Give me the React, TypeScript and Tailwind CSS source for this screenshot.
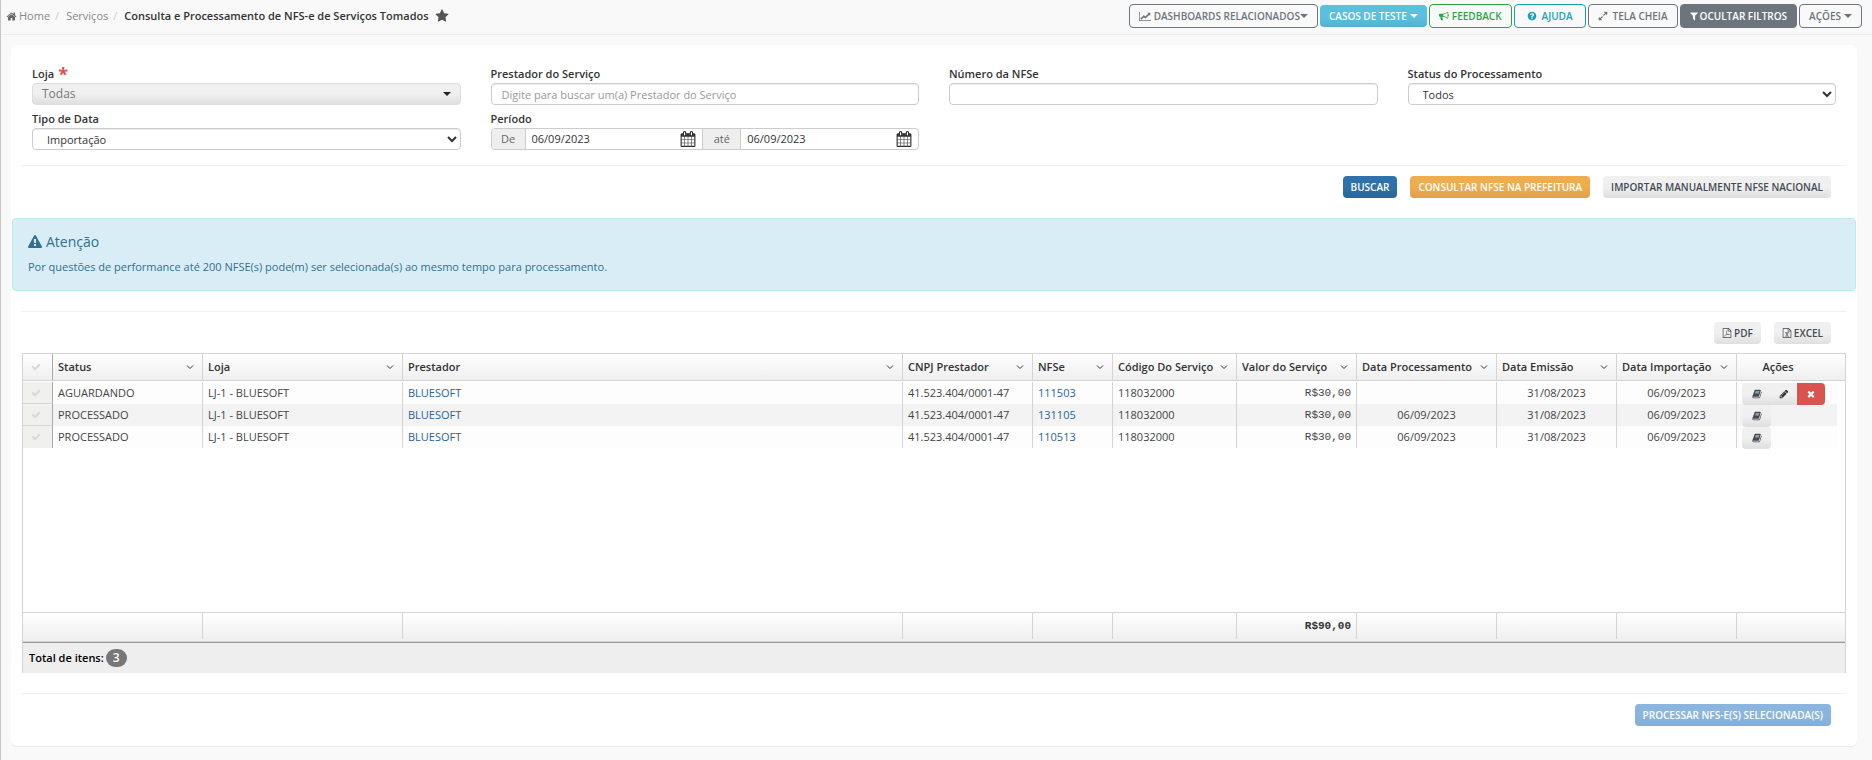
import { useState } from 'react';
import type { ReactNode } from 'react';
import clsx from 'clsx';

// Font Awesome 4 glyphs, 1792 units tall
const ICONS = {
  home: { w: 1664, d: 'M1408 992v480q0 26-19 45t-45 19h-384v-384h-256v384h-384q-26 0-45-19t-19-45v-480q0-1 .5-3t.5-3l575-474 575 474q1 2 1 6zm223-69l-62 74q-8 9-21 11h-3q-13 0-21-7l-692-577-692 577q-12 8-24 7-13-2-21-11l-62-74q-8-10-7-23.5t11-21.5l719-599q32-26 76-26t76 26l244 204v-195q0-14 9-23t23-9h192q14 0 23 9t9 23v408l219 182q10 8 11 21.5t-7 23.5z' },
  star: { w: 1792, d: 'M1728 647q0 22-26 48l-363 354 86 500q1 7 1 20 0 21-10.5 35.5t-30.5 14.5q-19 0-40-12l-449-236-449 236q-22 12-40 12-21 0-31.5-14.5t-10.5-35.5q0-6 2-20l86-500-364-354q-25-27-25-48 0-37 56-46l502-73 225-455q19-41 49-41t49 41l225 455 502 73q56 9 56 46z' },
  chart: { w: 2048, d: 'M2048 1536v128h-2048v-1536h128v1408h1920zm-128-1248v435q0 21-19.5 29.5t-35.5-7.5l-121-121-633 633q-10 10-23 10t-23-10l-233-233-416 416-192-192 585-585q10-10 23-10t23 10l233 233 464-464-121-121q-16-16-7.5-35.5t29.5-19.5h435q14 0 23 9t9 23z' },
  bullhorn: { w: 1792, d: 'M1664 640q53 0 90.5 37.5t37.5 90.5-37.5 90.5-90.5 37.5v384q0 52-38 90t-90 38q-417-347-812-380-58 19-91 66t-31 100.5 40 92.5q-20 33-23 65.5t6 58 33.5 55 48 50 61.5 50.5q-29 58-111.5 83t-168.5 11.5-132-55.5q-7-23-29.5-87.5t-32-94.5-23-89-15-101 3.5-98 22-110.5h-122q-66 0-113-47t-47-113v-192q0-66 47-113t113-47h480q435 0 896-384 52 0 90 38t38 90v384zm-128 604v-954q-394 302-768 343v270q377 42 768 341z' },
  help: { w: 1792, d: 'M1024 1376v-192q0-14-9-23t-23-9h-192q-14 0-23 9t-9 23v192q0 14 9 23t23 9h192q14 0 23-9t9-23zm256-672q0-88-55.5-163t-138.5-116-170-41q-243 0-371 213-15 24 8 42l132 100q7 6 19 6 16 0 25-12 53-68 86-92 34-24 86-24 48 0 85.5 26t37.5 59q0 38-20 61t-68 45q-63 28-115.5 86.5t-52.5 125.5v36q0 14 9 23t23 9h192q14 0 23-9t9-23q0-19 21.5-49.5t54.5-49.5q32-18 49-28.5t46-35 44.5-48 28-60.5 12.5-81zm384 192q0 209-103 385.5t-279.5 279.5-385.5 103-385.5-103-279.5-279.5-103-385.5 103-385.5 279.5-279.5 385.5-103 385.5 103 279.5 279.5 103 385.5z' },
  expand: { w: 1792, d: 'M883 1056q0 13-10 23l-332 332 144 144q19 19 19 45t-19 45-45 19h-448q-26 0-45-19t-19-45v-448q0-26 19-45t45-19 45 19l144 144 332-332q10-10 23-10t23 10l114 114q10 10 10 23zm781-864v448q0 26-19 45t-45 19-45-19l-144-144-332 332q-10 10-23 10t-23-10l-114-114q-10-10-10-23t10-23l332-332-144-144q-19-19-19-45t19-45 45-19h448q26 0 45 19t19 45z' },
  filter: { w: 1408, d: 'M1403 295q17 41-14 70l-493 493v742q0 42-39 59-13 5-25 5-27 0-45-19l-256-256q-19-19-19-45v-486l-493-493q-31-29-14-70 17-39 59-39h1280q42 0 59 39z' },
  calendar: { w: 1792, d: 'M192 1664h288v-288h-288v288zm352 0h320v-288h-320v288zm-352-352h288v-320h-288v320zm352 0h320v-320h-320v320zm-352-384h288v-288h-288v288zm736 736h320v-288h-320v288zm-384-736h320v-288h-320v288zm768 736h288v-288h-288v288zm-384-352h320v-320h-320v320zm-352-864v-288q0-13-9.5-22.5t-22.5-9.5h-64q-13 0-22.5 9.5t-9.5 22.5v288q0 13 9.5 22.5t22.5 9.5h64q13 0 22.5-9.5t9.5-22.5zm736 864h288v-320h-288v320zm-384-384h320v-288h-320v288zm384 0h288v-288h-288v288zm32-480v-288q0-13-9.5-22.5t-22.5-9.5h-64q-13 0-22.5 9.5t-9.5 22.5v288q0 13 9.5 22.5t22.5 9.5h64q13 0 22.5-9.5t9.5-22.5zm384-64v1280q0 52-38 90t-90 38h-1408q-52 0-90-38t-38-90v-1280q0-52 38-90t90-38h128v-96q0-66 47-113t113-47h64q66 0 113 47t47 113v96h384v-96q0-66 47-113t113-47h64q66 0 113 47t47 113v96h128q52 0 90 38t38 90z' },
  warning: { w: 1792, d: 'M1024 1375v-190q0-14-9.5-23.5t-22.5-9.5h-192q-13 0-22.5 9.5t-9.5 23.5v190q0 14 9.5 23.5t22.5 9.5h192q13 0 22.5-9.5t9.5-23.5zm-2-374l18-459q0-12-10-19-13-11-24-11h-220q-11 0-24 11-10 7-10 21l17 457q0 10 10 16.5t24 6.5h185q14 0 23.5-6.5t10.5-16.5zm-14-934l768 1408q35 63-2 126-17 29-46.5 46t-63.5 17h-1536q-34 0-63.5-17t-46.5-46q-37-63-2-126l768-1408q17-31 47-49t65-18 65 18 47 49z' },
  book: { w: 1792, d: 'M1703 478q40 57 18 129l-275 906q-19 64-76.5 107.5t-122.5 43.5h-923q-77 0-148.5-53.5t-99.5-131.5q-24-67-2-127 0-4 3-27t4-37q1-8-3-21.5t-3-19.5q2-11 8-21t16.5-23.5 16.5-23.5q23-38 45-91.5t30-91.5q3-10 .5-30t-.5-28q3-11 17-28t17-23q21-36 42-92t25-90q1-9-2.5-32t.5-28q4-13 22-30.5t22-22.5q19-26 42.5-84.5t27.5-96.5q1-8-3-25.5t-2-26.5q2-8 9-18t18-23 17-21q8-12 16.5-30.5t15-35 16-36 19.5-32 26.5-23.5 36-11.5 47.5 5.5l-1 3q38-9 51-9h761q74 0 114 56t18 130l-274 906q-36 119-71.5 153.5t-128.5 34.5h-869q-27 0-38 15-11 16-1 43 24 70 144 70h923q29 0 56-15.5t35-41.5l300-987q7-22 5-57 38 15 59 43zm-1064 2q-4 13 2 22.5t20 9.5h608q13 0 25.5-9.5t16.5-22.5l21-64q4-13-2-22.5t-20-9.5h-608q-13 0-25.5 9.5t-16.5 22.5zm-83 256q-4 13 2 22.5t20 9.5h608q13 0 25.5-9.5t16.5-22.5l21-64q4-13-2-22.5t-20-9.5h-608q-13 0-25.5 9.5t-16.5 22.5z' },
  pencil: { w: 1792, d: 'M491 1536l91-91-235-235-91 91v107h128v128h107zm523-928q0-22-22-22-10 0-17 7l-542 542q-7 7-7 17 0 22 22 22 10 0 17-7l542-542q7-7 7-17zm-54-192l416 416-832 832h-416v-416zm683 96q0 53-37 90l-166 166-416-416 166-165q36-38 90-38 53 0 91 38l235 234q37 39 37 91z' },
  times: { w: 1792, d: 'M1490 1322q0 40-28 68l-136 136q-28 28-68 28t-68-28l-294-294-294 294q-28 28-68 28t-68-28l-136-136q-28-28-28-68t28-68l294-294-294-294q-28-28-28-68t28-68l136-136q28-28 68-28t68 28l294 294 294-294q28-28 68-28t68 28l136 136q28 28 28 68t-28 68l-294 294 294 294q28 28 28 68z' },
  check: { w: 1792, d: 'M1671 566q0 40-28 68l-724 724-136 136q-28 28-68 28t-68-28l-136-136-362-362q-28-28-28-68t28-68l136-136q28-28 68-28t68 28l294 295 656-657q28-28 68-28t68 28l136 136q28 28 28 68z' },
  pdf: { w: 1792, d: 'M1596 380q28 28 48 76t20 88v1152q0 40-28 68t-68 28h-1344q-40 0-68-28t-28-68v-1600q0-40 28-68t68-28h896q40 0 88 20t76 48zm-444-244v376h376q-10-29-22-41l-313-313q-12-12-41-22zm384 1528v-1024h-416q-40 0-68-28t-28-68v-416h-768v1536h1280zm-514-593q33 26 84 56 59-7 117-7 147 0 177 49 16 22 2 52 0 1-1 2l-2 2v1q-6 38-71 38-48 0-115-20t-130-53q-221 24-392 83-153 262-242 262-15 0-28-7l-24-12q-1-1-6-5-10-10-6-36 9-40 56-91.5t132-96.5q14-9 23 6 2 2 2 4 52-85 107-197 68-136 104-262-24-82-30.5-159.5t6.5-127.5q11-40 42-40h22q23 0 35 15 18 21 9 68-2 6-4 8 1 3 1 8v30q-2 123-14 192 55 164 146 238zm-576 411q52-24 137-158-51 40-87.5 84t-49.5 74zm398-920q-15 42-2 132 1-7 7-44 0-3 7-43 1-4 4-8-1-1-1-2-1-2-1-3-1-22-13-36 0 1-1 2v2zm-124 661q135-54 284-81-2-1-13-9.5t-16-13.5q-76-67-127-176-27 86-83 197-30 56-45 83zm646-16q-24-24-140-24 76 28 124 28 14 0 18-1 0-1-2-3z' },
  excel: { w: 1792, d: 'M1596 380q28 28 48 76t20 88v1152q0 40-28 68t-68 28h-1344q-40 0-68-28t-28-68v-1600q0-40 28-68t68-28h896q40 0 88 20t76 48zm-444-244v376h376q-10-29-22-41l-313-313q-12-12-41-22zm384 1528v-1024h-416q-40 0-68-28t-28-68v-416h-768v1536h1280zm-979-234v106h281v-106h-75l103-161q5-7 10-16.5t7.5-13.5 3.5-4h2q1 4 5 10 2 4 4.5 7.5t6 8 6.5 8.5l107 161h-76v106h291v-106h-68l-192-273 195-282h67v-107h-279v107h74l-103 159q-4 7-10 16.5t-9 13.5l-2 3h-2q-1-4-5-10-6-11-17-23l-106-159h76v-107h-290v107h68l189 272-194 283h-68z' },
};

function Icon({ name, className }: { name: keyof typeof ICONS; className?: string }) {
  const icon = ICONS[name];
  return (
    <svg viewBox={`0 0 ${icon.w} 1792`} fill="currentColor" className={clsx('shrink-0', className)} aria-hidden="true">
      <path d={icon.d} />
    </svg>
  );
}

function Caret({ className }: { className?: string }) {
  return (
    <svg viewBox="0 0 8 4" fill="currentColor" className={clsx('h-1 w-2 shrink-0', className)} aria-hidden="true">
      <path d="M0 0h8L4 4z" />
    </svg>
  );
}

function Chevron() {
  return (
    <svg viewBox="0 0 8 8" fill="none" stroke="currentColor" className="size-2 shrink-0" aria-hidden="true">
      <path d="M1 2.5l3 3 3-3" />
    </svg>
  );
}

const topBtn = 'flex h-6 items-center rounded border text-[10px] font-semibold';
const btn = 'flex h-[22px] items-center rounded px-2 text-[10px] font-semibold';
const lightBtn = 'bg-linear-to-b from-[#f0f0f0] from-50% to-[#dfdfdf] text-[#444b55]';
const field = 'h-[22px] w-full rounded border border-[#ccc] bg-white text-[11px] text-[#333] shadow-[inset_0_1px_1px_rgba(0,0,0,0.075)]';

function Field({ id, label, required, children }: { id: string; label: string; required?: boolean; children: ReactNode }) {
  return (
    <div>
      <label htmlFor={id} className="flex h-[18px] items-center gap-1 text-[11px] font-semibold text-[#333]">
        {label}
        {required && <span className="text-lg leading-[18px] font-bold text-[#d9534f]">*</span>}
      </label>
      {children}
    </div>
  );
}

interface Nota {
  status: string;
  nfse: string;
  processamento: string;
}

const notas: Nota[] = [
  { status: 'AGUARDANDO', nfse: '111503', processamento: '' },
  { status: 'PROCESSADO', nfse: '131105', processamento: '06/09/2023' },
  { status: 'PROCESSADO', nfse: '110513', processamento: '06/09/2023' },
];

const columns = [
  { title: 'Status', width: 'w-[150px]' },
  { title: 'Loja', width: 'w-[200px]' },
  { title: 'Prestador', width: '' },
  { title: 'CNPJ Prestador', width: 'w-[130px]' },
  { title: 'NFSe', width: 'w-[80px]' },
  { title: 'Código Do Serviço', width: 'w-[124px]' },
  { title: 'Valor do Serviço', width: 'w-[120px]' },
  { title: 'Data Processamento', width: 'w-[140px]' },
  { title: 'Data Emissão', width: 'w-[120px]' },
  { title: 'Data Importação', width: 'w-[120px]' },
];

function NotasTable() {
  const cell = 'border-r border-[#d4d4d4] px-[5px]';
  return (
    <table className="w-full table-fixed border-separate border-spacing-0 text-left text-[11px] text-[#444]">
      <colgroup>
        <col className="w-[30px]" />
        {columns.map((c) => <col key={c.title} className={c.width} />)}
        <col className="w-[100px]" />
        <col className="w-2" />
      </colgroup>
      <thead>
        <tr className="h-[27px] bg-linear-to-b from-white to-[#eee] text-[#333]">
          <th className="border-r border-b border-[#d4d4d4] border-r-[#aaa] p-0">
            <Icon name="check" className="ml-2 size-[10px] text-[#d8d8d8]" />
          </th>
          {columns.map((c) => (
            <th key={c.title} className="border-r border-b border-[#d4d4d4] py-0 pr-2 pl-[5px] font-semibold whitespace-nowrap">
              <span className="flex items-center justify-between">
                {c.title}
                <Chevron />
              </span>
            </th>
          ))}
          <th colSpan={2} className="border-b border-[#d4d4d4] py-0 pr-[26px] pl-0 text-center font-semibold">Ações</th>
        </tr>
      </thead>
      <tbody>
        <tr className="h-px"><td colSpan={13} className="p-0" /></tr>
        {notas.map((n, i) => {
          const bg = i % 2 ? 'bg-[#f3f3f3]' : 'bg-[#fdfdfd]';
          const last = i === notas.length - 1;
          return (
            <tr key={n.nfse} className="h-[22px]">
              <td className={clsx('border-r border-r-[#aaa] bg-[#f0f0ee] p-0', !last && 'border-b border-b-[#d4d4d4]')}>
                <Icon name="check" className="ml-2 size-[10px] text-[#d8d8d8]" />
              </td>
              <td className={clsx(cell, bg)}>{n.status}</td>
              <td className={clsx(cell, bg)}>LJ-1 - BLUESOFT</td>
              <td className={clsx(cell, bg)}><a href="#prestador" className="text-[#2a6496]">BLUESOFT</a></td>
              <td className={clsx(cell, bg)}>41.523.404/0001-47</td>
              <td className={clsx(cell, bg)}><a href="#nfse" className="text-[#2a6496]">{n.nfse}</a></td>
              <td className={clsx(cell, bg)}>118032000</td>
              <td className={clsx(cell, bg, "text-right font-['Courier_New','Liberation_Mono',monospace]")}>R$30,00</td>
              <td className={clsx(cell, bg, 'text-center')}>{n.processamento}</td>
              <td className={clsx(cell, bg, 'text-center')}>31/08/2023</td>
              <td className={clsx(cell, bg, 'text-center')}>06/09/2023</td>
              <td className={clsx('p-0', bg)}>
                <div className="-mb-px ml-[5px] flex h-[22px] w-max overflow-hidden rounded">
                  <button type="button" aria-label="Detalhes" className={clsx('flex w-[29px] items-center justify-center', lightBtn)}>
                    <Icon name="book" className="size-[10px]" />
                  </button>
                  {i === 0 && (
                    <>
                      <button type="button" aria-label="Editar" className={clsx('flex w-[26px] items-center justify-center', lightBtn)}>
                        <Icon name="pencil" className="size-[10px] text-[#333]" />
                      </button>
                      <button type="button" aria-label="Excluir" className="flex w-7 items-center justify-center bg-[#d9534f] text-white">
                        <Icon name="times" className="size-[10px]" />
                      </button>
                    </>
                  )}
                </div>
              </td>
              <td className="p-0" />
            </tr>
          );
        })}
        <tr className="h-[164px]"><td colSpan={13} className="p-0" /></tr>
      </tbody>
      <tfoot>
        <tr className="h-[30px] bg-linear-to-b from-white to-[#eee] align-top">
          {columns.map((c, i) => (
            <td key={c.title} colSpan={i === 0 ? 2 : 1} className="border-t border-b border-[#d4d4d4] p-0">
              <div className="h-[26px] border-r border-[#d4d4d4] pr-[5px] text-right font-['Courier_New','Liberation_Mono',monospace] leading-[26px] font-bold text-[#333]">
                {c.title === 'Valor do Serviço' && 'R$90,00'}
              </div>
            </td>
          ))}
          <td colSpan={2} className="border-t border-b border-[#d4d4d4] p-0" />
        </tr>
      </tfoot>
    </table>
  );
}

export default function App() {
  const [prestador, setPrestador] = useState('');
  const [numero, setNumero] = useState('');
  const [dataDe, setDataDe] = useState('06/09/2023');
  const [dataAte, setDataAte] = useState('06/09/2023');

  return (
    <div className="min-h-screen border-l border-[#c6c6c6] bg-[#f9f9f9] font-['Open_Sans','Noto_Sans',sans-serif] text-[11px] leading-4 text-[#333]">
      <header className="flex h-[35px] items-start justify-between border-b border-[#ebebeb] pr-[10px] pl-[5px]">
        <nav className="flex h-8 items-center text-[11px] text-[#888]">
          <a href="#home" className="flex items-center gap-[2px]">
            <Icon name="home" className="size-[11px] text-[#666]" />
            Home
          </a>
          <span className="px-[5px] text-[#ccc]">/</span>
          <a href="#servicos" className="pl-[2px]">Serviços</a>
          <span className="px-[5px] text-[#ccc]">/</span>
          <h1 className="pl-[2px] font-semibold text-[#333]">Consulta e Processamento de NFS-e de Serviços Tomados</h1>
          <Icon name="star" className="ml-[6px] size-[14px] text-[#555]" />
        </nav>
        <div className="flex items-center gap-[2px] pt-1">
          <button type="button" className={clsx(topBtn, 'border-[#6c757d] px-[9px] text-[#6c757d]')}>
            <Icon name="chart" className="mr-[3px] h-[11px] w-3" />
            DASHBOARDS RELACIONADOS
            <Caret />
          </button>
          <button type="button" className="flex h-[22px] items-center gap-[3px] rounded bg-linear-to-b from-[#5bc0de] from-50% to-[#52b3d1] px-[9px] text-[10px] font-semibold text-white">
            CASOS DE TESTE
            <Caret />
          </button>
          <button type="button" className={clsx(topBtn, 'gap-[3px] border-[#28a745] px-[9px] text-[#28a745]')}>
            <Icon name="bullhorn" className="size-[10px]" />
            FEEDBACK
          </button>
          <button type="button" className={clsx(topBtn, 'gap-[5px] border-[#17a2b8] px-3 text-[#17a2b8]')}>
            <Icon name="help" className="size-[10px]" />
            AJUDA
          </button>
          <button type="button" className={clsx(topBtn, 'gap-[5px] border-[#6c757d] px-[9px] text-[#6c757d]')}>
            <Icon name="expand" className="size-[10px]" />
            TELA CHEIA
          </button>
          <button type="button" className={clsx(topBtn, 'gap-[2px] border-[#6c757d] bg-[#6c757d] px-[9px] text-white')}>
            <Icon name="filter" className="h-[10px] w-2" />
            OCULTAR FILTROS
          </button>
          <button type="button" className={clsx(topBtn, 'gap-[3px] border-[#6c757d] px-[9px] text-[#6c757d]')}>
            AÇÕES
            <Caret />
          </button>
        </div>
      </header>

      <main className="mt-[10px] mr-[15px] ml-[10px] rounded-md border-b border-[#ebebeb] bg-white pt-5 pb-5">
        <form className="grid grid-cols-4 gap-x-[30px] gap-y-[5px] px-[21px]">
          <Field id="loja" label="Loja" required>
            <button id="loja" type="button" className="flex h-[22px] w-full items-center justify-between rounded border border-[#ddd] bg-linear-to-b from-[#f0f0f0] from-50% to-[#dfdfdf] px-[9px] text-xs text-[#777]">
              Todas
              <Caret className="text-[#222]" />
            </button>
          </Field>
          <Field id="prestador" label="Prestador do Serviço">
            <input
              id="prestador"
              type="text"
              className={clsx(field, 'px-[10px] placeholder:text-[#999]')}
              placeholder="Digite para buscar um(a) Prestador do Serviço"
              value={prestador}
              onChange={(e) => setPrestador(e.target.value)}
            />
          </Field>
          <Field id="numero" label="Número da NFSe">
            <input id="numero" type="text" className={clsx(field, 'px-[10px]')} value={numero} onChange={(e) => setNumero(e.target.value)} />
          </Field>
          <Field id="status" label="Status do Processamento">
            <select id="status" className={clsx(field, 'pl-[10px]')}>
              <option>Todos</option>
            </select>
          </Field>
          <Field id="tipoData" label="Tipo de Data">
            <select id="tipoData" className={clsx(field, 'pl-[10px]')}>
              <option>Importação</option>
            </select>
          </Field>
          <Field id="periodoDe" label="Período">
            <div className="flex h-[22px] items-stretch overflow-hidden rounded border border-[#ccc] text-[#333]">
              <span className="flex w-[34px] items-center justify-center border-r border-[#ccc] bg-[#eee] text-[#666]">De</span>
              <div className="flex min-w-0 flex-1 items-center px-[6px]">
                <input id="periodoDe" type="text" className="w-0 flex-1" value={dataDe} onChange={(e) => setDataDe(e.target.value)} />
                <Icon name="calendar" className="size-4" />
              </div>
              <label htmlFor="periodoAte" className="flex w-[39px] items-center justify-center border-x border-[#ccc] bg-[#eee] text-[#666]">até</label>
              <div className="flex min-w-0 flex-1 items-center px-[6px]">
                <input id="periodoAte" type="text" className="w-0 flex-1" value={dataAte} onChange={(e) => setDataAte(e.target.value)} />
                <Icon name="calendar" className="size-4" />
              </div>
            </div>
          </Field>
        </form>

        <hr className="mx-[11px] mt-[15px] border-[#f1f1f5]" />
        <div className="mt-[10px] flex justify-end gap-[13px] pr-[26px]">
          <button type="button" className={clsx(btn, 'bg-linear-to-b from-[#2f72ab] from-50% to-[#29659a] text-white')}>BUSCAR</button>
          <button type="button" className={clsx(btn, 'bg-linear-to-b from-[#f0ad4e] from-50% to-[#e0a047] text-white')}>CONSULTAR NFSE NA PREFEITURA</button>
          <button type="button" className={clsx(btn, lightBtn)}>IMPORTAR MANUALMENTE NFSE NACIONAL</button>
        </div>

        <section className="mt-5 mr-px ml-px h-[73px] rounded border border-[#bce8f1] bg-[#d9edf7] px-[15px] pt-[14px] text-[#31708f]">
          <h2 className="flex h-[18px] items-center gap-1 text-sm">
            <Icon name="warning" className="size-[14px]" />
            Atenção
          </h2>
          <p className="mt-2">Por questões de performance até 200 NFSE(s) pode(m) ser selecionada(s) ao mesmo tempo para processamento.</p>
        </section>

        <hr className="mx-[11px] mt-5 border-[#f1f1f1]" />
        <div className="mt-[10px] mb-[9px] flex justify-end gap-[13px] pr-[26px]">
          <button type="button" className={clsx(btn, lightBtn, 'gap-[2px]')}>
            <Icon name="pdf" className="size-[10px]" />
            PDF
          </button>
          <button type="button" className={clsx(btn, lightBtn, 'gap-[2px]')}>
            <Icon name="excel" className="size-[10px]" />
            EXCEL
          </button>
        </div>

        <div className="mx-[11px] border border-b-0 border-[#d4d4d4]">
          <NotasTable />
          <div className="flex h-[31px] items-center gap-[2px] border-t border-[#999] bg-[#eee] px-[6px] font-semibold text-black">
            Total de itens:
            <span className="rounded-full bg-[#777] px-[7px] text-xs leading-[18px] text-white">3</span>
          </div>
        </div>

        <hr className="mx-[11px] mt-5 border-[#f1f1f1]" />
        <div className="mt-[10px] flex justify-end pr-[26px]">
          <button type="button" disabled className={clsx(btn, 'bg-linear-to-b from-[#8ab5de] from-50% to-[#85aed8] text-white')}>
            PROCESSAR NFS-E(S) SELECIONADA(S)
          </button>
        </div>
      </main>
    </div>
  );
}
